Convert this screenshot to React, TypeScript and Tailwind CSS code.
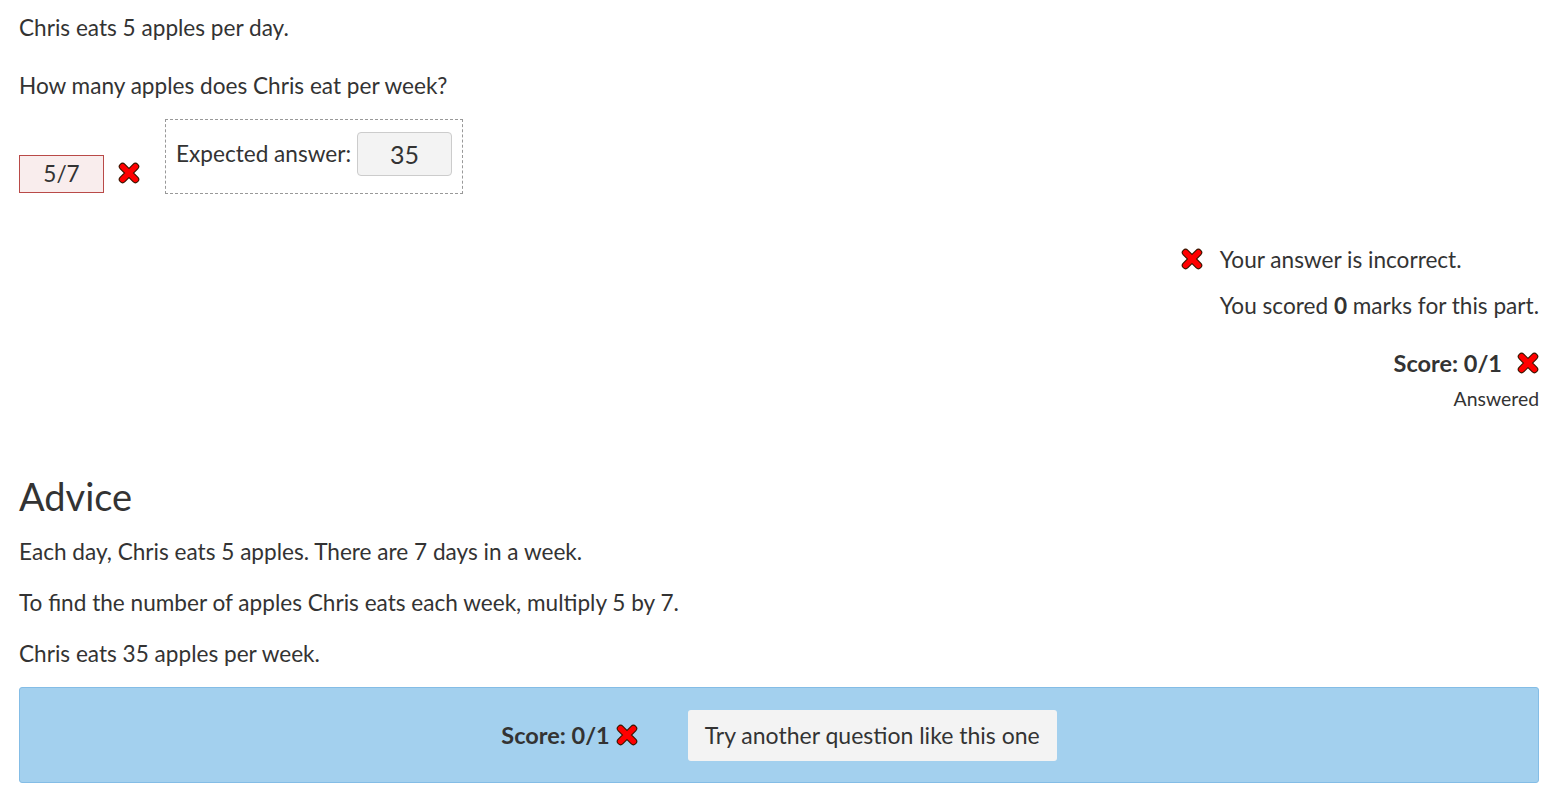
import React from 'react';

// red cross, drawn as two rounded bars with a dark edge
const CrossIcon = ({ className = "" }: { className?: string }) => (
  <svg viewBox="0 0 20 20" className={className} aria-hidden="true">
    <g strokeLinecap="round">
      <path d="M4.2 4.2 L15.8 15.8 M15.8 4.2 L4.2 15.8" stroke="#3a1600" strokeWidth="7" />
      <path d="M4.2 4.2 L15.8 15.8 M15.8 4.2 L4.2 15.8" stroke="#ff0000" strokeWidth="5" />
    </g>
  </svg>
);

export default function App() {
  return (
    <div
      className="min-h-screen w-full bg-white text-[#333333] text-[22.6px] leading-[28px] pl-[19px] pr-[17px]"
      style={{ fontFamily: 'Lato, "Noto Sans", sans-serif' }}
    >
      {/* question */}
      <p className="pt-[14px]">Chris eats 5 apples per day.</p>
      <p className="mt-[30px]">How many apples does Chris eat per week?</p>

      {/* answer row */}
      <div className="mt-[19px] flex items-end">
        <div className="w-[85px] h-[38px] mb-[1px] border border-[#b94a48] bg-[#f9eded] flex items-center justify-center">5/7</div>
        <CrossIcon className="w-[22px] h-[22px] ml-[14px] mb-[10px]" />
        <div className="ml-[25px] border border-dashed border-[#999999] h-[75px] w-[298px] flex items-center pl-[10px] pb-[5px]">
          <span>Expected answer:</span>
          <div className="ml-[6px] w-[95px] h-[44px] rounded-[4px] border border-[#cccccc] bg-[#f3f3f3] flex items-center justify-center text-[25px]">35</div>
        </div>
      </div>

      {/* feedback */}
      <div className="mt-[52px] flex flex-col items-end">
        <div className="flex items-start">
          <CrossIcon className="w-[22px] h-[22px] mr-[17px] mt-[2px]" />
          <div>
            <p>Your answer is incorrect.</p>
            <p className="mt-[18px]">You scored <b>0</b> marks for this part.</p>
          </div>
        </div>
        <div className="mt-[28px] flex items-center font-bold text-[23.5px] leading-[30px]">
          <span>Score: 0/1</span>
          <CrossIcon className="w-[22px] h-[22px] ml-[15px]" />
        </div>
        <p className="text-[19.4px] leading-[24px] mt-[9px]">Answered</p>
      </div>

      {/* advice */}
      <h2 className="mt-[62px] text-[38px] leading-[46px]">Advice</h2>
      <p className="mt-[19px]">Each day, Chris eats 5 apples. There are 7 days in a week.</p>
      <p className="mt-[23px]">To find the number of apples Chris eats each week, multiply 5 by 7.</p>
      <p className="mt-[23px]">Chris eats 35 apples per week.</p>

      {/* bottom bar */}
      <div className="mt-[19px] h-[96px] border border-[#84bde6] bg-[#a3d0ee] rounded-[3px] flex items-center justify-center">
        <div className="flex items-center font-bold text-[23.5px]">
          <span>Score: 0/1</span>
          <CrossIcon className="w-[22px] h-[22px] ml-[6px]" />
        </div>
        <button className="ml-[50px] h-[51px] px-[17px] bg-[#f3f3f3] rounded-[3px] text-[23px]">Try another question like this one</button>
      </div>
    </div>
  );
}
